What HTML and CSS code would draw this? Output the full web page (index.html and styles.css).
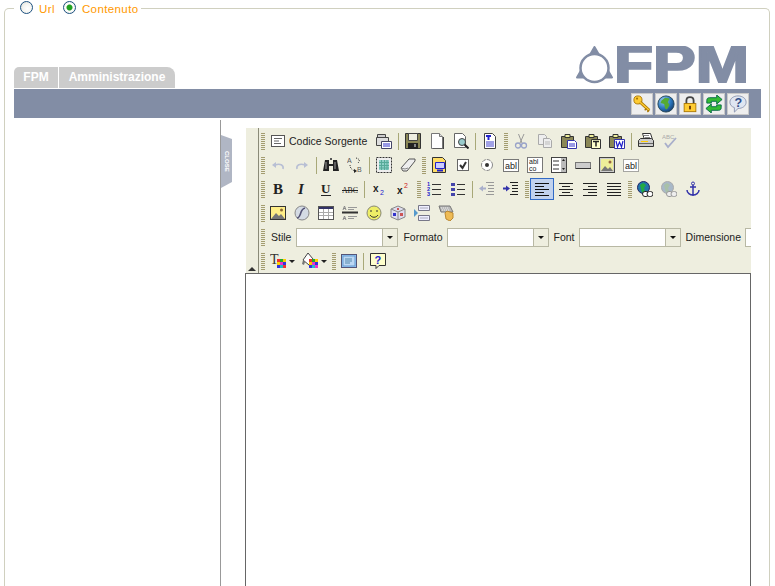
FILE: index.html
```html
<!DOCTYPE html>
<html lang="it">
<head>
<meta charset="utf-8">
<title>FPM</title>
<link rel="stylesheet" href="styles.css">
</head>
<body>
<svg class="sprite" aria-hidden="true">
<defs>
<radialGradient id="sphere" cx="35%" cy="30%" r="75%"><stop offset="0" stop-color="#9fd0f0"/><stop offset=".6" stop-color="#2a78c0"/><stop offset="1" stop-color="#173f70"/></radialGradient>
</defs>
<symbol id="source" viewBox="0 0 16 16"><rect x="1.500" y="2.500" width="13" height="11" fill="#fff" stroke="#555"/><path d="M4 5.500h8M4 8h5M4 10.500h7" stroke="#666" fill="none"/></symbol>
<symbol id="docprops" viewBox="0 0 16 16"><path d="M1.500 1.500h8v3h-8z" fill="#ccc" stroke="#444"/><path d="M.5 4.500h12v8H.5z" fill="#ddd" stroke="#444"/><path d="M5.500 8.500h10v7h-10z" fill="#fff" stroke="#446"/><path d="M7 11h7M7 13h7" stroke="#33c"/></symbol>
<symbol id="save" viewBox="0 0 16 16"><path d="M.5.500h15v15H.5z" fill="#8a8756" stroke="#333"/><path d="M3.500.500h9v7h-9z" fill="#eeeee0" stroke="#444"/><path d="M3 10h10v6H3z" fill="#222"/><path d="M9 11h2v3H9z" fill="#888"/></symbol>
<symbol id="new" viewBox="0 0 16 16"><path d="M2.500.500h8l3 3v12h-11z" fill="#fff" stroke="#777"/><path d="M10.500.500v3h3" fill="#ddd" stroke="#777"/><path d="M14.500 4v12H4" stroke="#444" fill="none"/></symbol>
<symbol id="preview" viewBox="0 0 16 16"><path d="M1.500.500h8l3 3v11h-11z" fill="#fff" stroke="#666"/><circle cx="9" cy="9" r="3.500" fill="#9cc" stroke="#444"/><path d="M11.500 11.500l4 4" stroke="#222" stroke-width="2"/></symbol>
<symbol id="templates" viewBox="0 0 16 16"><path d="M2.500.500h8l3 3v12h-11z" fill="#fff" stroke="#444"/><path d="M4 3h5M6.500 3v4" stroke="#22c" stroke-width="2"/><path d="M4 9h8M4 11h8M4 13h8" stroke="#44c"/></symbol>
<symbol id="cut" viewBox="0 0 16 16"><path d="M5.500 1l3.500 9M11 1L7 10" stroke="#999" fill="none"/><circle cx="5" cy="12.500" r="2.500" fill="none" stroke="#99a3c9" stroke-width="1.300"/><circle cx="11" cy="12.500" r="2.500" fill="none" stroke="#99a3c9" stroke-width="1.300"/></symbol>
<symbol id="copy" viewBox="0 0 16 16"><path d="M1.500 1.500h6l2 2v8h-8z" fill="#eee" stroke="#aaa"/><path d="M6.500 5.500h6l2 2v7h-8z" fill="#eee" stroke="#aaa"/><path d="M8 9h5M8 11h5" stroke="#bbb"/></symbol>
<symbol id="paste" viewBox="0 0 16 16"><path d="M.500 3.500h12v11H.5z" fill="#8a8756" stroke="#333"/><path d="M4 1.500h5v3H4z" fill="#ee9" stroke="#333"/><path d="M6.500 7.500h7l2 2v6h-9z" fill="#fff" stroke="#33a"/><path d="M8 11h6M8 13h6" stroke="#33c"/></symbol>
<symbol id="pastetext" viewBox="0 0 16 16"><path d="M.500 3.500h12v11H.5z" fill="#8a8756" stroke="#333"/><path d="M4 1.500h5v3H4z" fill="#ee9" stroke="#333"/><path d="M6.500 6.500h9v9h-9z" fill="#ffc" stroke="#333"/><path d="M8 8.500h6M11 8.500v5" stroke="#222" stroke-width="1.500"/></symbol>
<symbol id="pasteword" viewBox="0 0 16 16"><path d="M.500 3.500h12v11H.5z" fill="#8a8756" stroke="#333"/><path d="M4 1.500h5v3H4z" fill="#ee9" stroke="#333"/><path d="M5.500 6.500h10v9h-10z" fill="#fff" stroke="#33a"/><path d="M7 8l1.500 6L10.500 9l2 5L14 8" fill="none" stroke="#22c" stroke-width="1.200"/></symbol>
<symbol id="print" viewBox="0 0 16 16"><path d="M4.500.500h8l2 6h-8z" fill="#fff" stroke="#333"/><path d="M6 2.500h5M7 4.500h5" stroke="#888"/><path d="M.5 7.500l2-2h11l2 2v6h-15z" fill="#ccc" stroke="#333"/><path d="M1 10.500h14" stroke="#666"/><path d="M3 8.500h7" stroke="#fc0"/></symbol>
<symbol id="undo" viewBox="0 0 16 16"><path d="M13 12c1-4-3-6-8-4" fill="none" stroke="#b8bfd4" stroke-width="1.600"/><path d="M2 8l4-3v6z" fill="#b8bfd4"/></symbol>
<symbol id="redo" viewBox="0 0 16 16"><path d="M3 12c-1-4 3-6 8-4" fill="none" stroke="#b8bfd4" stroke-width="1.600"/><path d="M14 8l-4-3v6z" fill="#b8bfd4"/></symbol>
<symbol id="find" viewBox="0 0 16 16"><path d="M2 3h4v4h4V3h4l2 11h-6V9H6v5H0z" fill="#222"/><path d="M3 5v7M12 5v7" stroke="#999"/><path d="M7 1h2v2H7z" fill="#555"/></symbol>
<symbol id="selectall" viewBox="0 0 16 16"><rect x=".5" y=".5" width="15" height="15" fill="#eee" stroke="#333" stroke-dasharray="2 1"/><path d="M3 3h10v10H3z" fill="#8fd0c8"/><path d="M3 5.500h10M3 8.500h10M3 11h10M5.500 3v10M8.500 3v10M11 3v10" stroke="#5a9"/></symbol>
<symbol id="eraser" viewBox="0 0 16 16"><path d="M1 11l8-9h6v2l-8 10H3z" fill="#eee" stroke="#555"/><path d="M1 11l4 1 3-1" fill="none" stroke="#888"/></symbol>
<symbol id="form" viewBox="0 0 16 16"><path d="M1.500.500h10l3 3v12h-13z" fill="#fd6" stroke="#333"/><path d="M4.500 5.500h9v6h-9z" fill="#ccf" stroke="#22c"/><path d="M6 13.500h6" stroke="#22c" stroke-width="2"/></symbol>
<symbol id="check" viewBox="0 0 16 16"><rect x="2.500" y="2.500" width="11" height="11" fill="#fff" stroke="#666"/><path d="M5 8l2.500 3L11 5" fill="none" stroke="#333" stroke-width="2"/></symbol>
<symbol id="radio" viewBox="0 0 16 16"><circle cx="8" cy="8" r="5.500" fill="#fff" stroke="#888" stroke-dasharray="4 1"/><circle cx="8" cy="8" r="2" fill="#333"/></symbol>
<symbol id="selectf" viewBox="0 0 16 16"><rect x=".5" y=".5" width="15" height="15" fill="#fff" stroke="#444"/><path d="M10 1h5v14h-5z" fill="#bbb"/><path d="M2 4h6M2 8h6M2 12h6" stroke="#333"/><path d="M11 4h3l-1.500-2zM11 11h3l-1.500 2z" fill="#222"/></symbol>
<symbol id="buttonf" viewBox="0 0 16 16"><rect x=".5" y="5.500" width="15" height="6" fill="#ccc" stroke="#777"/><path d="M1 11.500h15" stroke="#333"/></symbol>
<symbol id="imagebtn" viewBox="0 0 16 16"><rect x=".5" y=".5" width="15" height="15" fill="#ccc" stroke="#444"/><rect x="2" y="2" width="12" height="12" fill="#ee9"/><path d="M2 14l4-5 3 3 2-2 3 4z" fill="#777"/><circle cx="11" cy="5" r="1.500" fill="#964"/></symbol>
<symbol id="ul" viewBox="0 0 16 16"><path d="M1 2h4v3H1zM1 7h4v3H1zM1 12h4v3H1z" fill="#44a"/><path d="M7 3.500h8M7 8.500h8M7 13.500h8" stroke="#333"/></symbol>
<symbol id="outdent" viewBox="0 0 16 16"><path d="M7 1.500h8M9 4.500h6M9 7.500h6M9 10.500h6M7 13.500h8" stroke="#999"/><path d="M0 7.500l4-3v2h3v2H4v2z" fill="#a9afcb"/></symbol>
<symbol id="indent" viewBox="0 0 16 16"><path d="M7 1.500h8M9 4.500h6M9 7.500h6M9 10.500h6M7 13.500h8" stroke="#222"/><path d="M7 7.500l-4-3v2H0v2h3v2z" fill="#33a"/></symbol>
<symbol id="left" viewBox="0 0 16 16"><path d="M1 2.500h14M1 5.500h9M1 8.500h14M1 11.500h9M1 14.500h14" stroke="#111"/></symbol>
<symbol id="center" viewBox="0 0 16 16"><path d="M1 2.500h14M4 5.500h8M1 8.500h14M4 11.500h8M1 14.500h14" stroke="#222"/></symbol>
<symbol id="right" viewBox="0 0 16 16"><path d="M1 2.500h14M6 5.500h9M1 8.500h14M6 11.500h9M1 14.500h14" stroke="#222"/></symbol>
<symbol id="justify" viewBox="0 0 16 16"><path d="M1 2.500h14M1 5.500h14M1 8.500h14M1 11.500h14M1 14.500h14" stroke="#222"/></symbol>
<symbol id="link" viewBox="0 0 16 16"><circle cx="6.500" cy="6.500" r="6" fill="#27a" stroke="#226"/><path d="M3 4l3-2 3 2-2 3 1 3-3 2-1-4z" fill="#2a4"/><rect x="5.500" y="10.500" width="6" height="5" rx="2.500" fill="#fff" stroke="#222"/><rect x="10" y="10.500" width="6" height="5" rx="2.500" fill="#fff" stroke="#222"/></symbol>
<symbol id="unlink" viewBox="0 0 16 16"><circle cx="6.500" cy="6.500" r="6" fill="#a8b8c8" stroke="#aaa"/><path d="M3 4l3-2 3 2-2 3 1 3-3 2-1-4z" fill="#a8c0a8"/><rect x="5.500" y="10.500" width="6" height="5" rx="2.500" fill="#eee" stroke="#999"/><rect x="10" y="10.500" width="6" height="5" rx="2.500" fill="#eee" stroke="#999"/></symbol>
<symbol id="anchor" viewBox="0 0 16 16"><circle cx="8" cy="2.500" r="1.500" fill="none" stroke="#33a"/><path d="M8 4v11M5 6h6M2 9c0 3 3 5 6 5s6-2 6-5" fill="none" stroke="#33a" stroke-width="1.500"/></symbol>
<symbol id="image" viewBox="0 0 16 16"><rect x=".5" y="1.500" width="15" height="13" fill="#fe8" stroke="#333"/><path d="M1 14l5-6 3 3 2-2 4 5z" fill="#777"/><circle cx="11.500" cy="5" r="1.500" fill="#863"/></symbol>
<symbol id="flash" viewBox="0 0 16 16"><circle cx="8" cy="8" r="7" fill="#d4dbe4" stroke="#888"/><path d="M11 3C7 4 7 8 6 10c-1 2-1 3-3 3" fill="none" stroke="#557" stroke-width="1.600"/></symbol>
<symbol id="table" viewBox="0 0 16 16"><rect x=".5" y="1.500" width="15" height="13" fill="#fff" stroke="#555"/><path d="M1 2h14v2H1z" fill="#336"/><path d="M1 7.500h14M1 10.500h14M5.500 4v10M10.500 4v10" stroke="#aaa"/></symbol>
<symbol id="rule" viewBox="0 0 16 16"><path d="M1 5l1.500-4L4 5M1.500 3.500h2M1 15l1.500-4L4 15M1.500 13.500h2" fill="none" stroke="#888"/><path d="M6 2.500h9M6 4.500h6" stroke="#999"/><path d="M0 7.500h16" stroke="#333" stroke-width="2"/><path d="M6 11.500h9M6 13.500h6" stroke="#999"/></symbol>
<symbol id="smiley" viewBox="0 0 16 16"><circle cx="8" cy="8" r="7" fill="#ee6" stroke="#887"/><path d="M5 5v2M11 5v2" stroke="#333"/><path d="M4 10c2 3 6 3 8 0" fill="none" stroke="#333"/></symbol>
<symbol id="special" viewBox="0 0 16 16"><path d="M8 1l7 3v8l-7 3-7-3V4z" fill="#dde" stroke="#888"/><path d="M8 7v8M1 4l7 3 7-3" fill="none" stroke="#888"/><path d="M3 8h3v3H3z" fill="#33c"/><path d="M10 8h3v3h-3z" fill="#c55"/><path d="M7 3h2v2H7z" fill="#c55"/></symbol>
<symbol id="pagebreak" viewBox="0 0 16 16"><path d="M4.500.500h11v5h-11zM4.500 10.500h11v5h-11z" fill="#eef" stroke="#778"/><path d="M6 3h8M6 13h8" stroke="#aab"/><path d="M0 4l4 4-4 4z" fill="#59c"/></symbol>
<symbol id="keyboard" viewBox="0 0 16 16"><path d="M1 1h11l3 6H3z" fill="#bbb" stroke="#777"/><path d="M3 3h8M4 5h8" stroke="#eee" stroke-dasharray="1 1"/><path d="M7 8l2-2 6 2v5l-3 3-4-2z" fill="#eb5" stroke="#b83"/></symbol>
<symbol id="bgcolor" viewBox="0 0 16 16"><path d="M6 0l5 6-4 6-6-5z" fill="#fff" stroke="#444"/><path d="M1 7l-1 4 2 1 1-3z" fill="#777"/><path d="M7 6h3v3H7z" fill="#e33"/><path d="M10 6h3v3h-3z" fill="#2a3"/><path d="M13 6h3v3h-3z" fill="#fc0"/><path d="M7 9h3v3H7z" fill="#fc0"/><path d="M10 9h3v3h-3z" fill="#e3c"/><path d="M13 9h3v3h-3z" fill="#33d"/><path d="M7 12h3v3H7z" fill="#33d"/><path d="M10 12h3v3h-3z" fill="#2bc"/><path d="M13 12h3v3h-3z" fill="#e3c"/></symbol>
<symbol id="maximize" viewBox="0 0 16 16"><rect x=".5" y="1.500" width="15" height="13" fill="#9cf" stroke="#557"/><rect x="2" y="3" width="12" height="10" fill="#bcd8f4" stroke="#69c"/><path d="M4 6h7M4 8h7M4 10h5" stroke="#58a"/></symbol>
<symbol id="key" viewBox="0 0 20 20"><circle cx="5.500" cy="5.500" r="4.500" fill="#fc3" stroke="#a70"/><circle cx="4.500" cy="4" r="1.200" fill="#a70"/><path d="M8 8l10 9" stroke="#a70" stroke-width="3.500"/><path d="M8 8l10 9" stroke="#fc3" stroke-width="1.500"/><path d="M15 15l-2 2M18 17l-2 2" stroke="#a70" stroke-width="1.500"/></symbol>
<symbol id="globe" viewBox="0 0 20 20"><circle cx="10" cy="10" r="9" fill="url(#sphere)" stroke="#245"/><path d="M5 6l4-3 5 1-2 4 2 3-3 5-2-1-1-5-4-1z" fill="#5a3"/></symbol>
<symbol id="lock" viewBox="0 0 20 20"><path d="M6 10V6c0-5 8-5 8 0v4" fill="none" stroke="#444" stroke-width="2"/><rect x="3.500" y="9.500" width="13" height="9" fill="#fc3" stroke="#a70"/><rect x="9" y="12" width="2" height="4" fill="#630"/></symbol>
<symbol id="refresh" viewBox="0 0 20 20"><path d="M2 9V6c0-2 1-3 3-3h8V0l6 5-6 5V7H7v2z" fill="#3b3" stroke="#064" stroke-linejoin="round"/><path d="M18 11v3c0 2-1 3-3 3H7v3l-6-5 6-5v3h6v-2z" fill="#3b3" stroke="#064" stroke-linejoin="round"/></symbol>
</svg>

<fieldset class="frame">
  <legend class="legend">
    <label class="opt"><input class="radio" type="radio" name="mode"><span>Url</span></label>
    <label class="opt"><input class="radio" type="radio" name="mode" checked><span>Contenuto</span></label>
  </legend>

  <header class="head">
    <nav class="tabs">
      <a class="tab">FPM</a>
      <a class="tab tab-wide">Amministrazione</a>
    </nav>
    <svg class="logo" viewBox="0 0 176 38" role="img" aria-label="FPM">
      <path d="M18.500 1L36 31.500H1z" fill="#828da5" stroke="#828da5" stroke-width="2" stroke-linejoin="round"/>
      <circle cx="18.500" cy="22" r="14" fill="#fff" stroke="#828da5" stroke-width="2.500"/>
      <text class="logo-text" x="38" y="36" textLength="135" lengthAdjust="spacingAndGlyphs" fill="#828da5" stroke="#828da5" stroke-width="2">FPM</text>
    </svg>
  </header>

  <div class="band">
    <a class="tool"><svg class="tool-ic"><use href="#key"/></svg></a>
    <a class="tool"><svg class="tool-ic"><use href="#globe"/></svg></a>
    <a class="tool"><svg class="tool-ic"><use href="#lock"/></svg></a>
    <a class="tool"><svg class="tool-ic"><use href="#refresh"/></svg></a>
    <a class="tool"><svg class="tool-ic" viewBox="0 0 20 20"><path d="M10 1c5 0 9 3 9 7s-4 7-9 7l-4 4v-5C3 13 1 11 1 8c0-4 4-7 9-7z" fill="#dfe6f2" stroke="#8a94b0"/><text x="6" y="13" class="t14 b" fill="#33508a">?</text></svg></a>
  </div>

  <div class="main">
    <aside class="side"></aside>
    <div class="close"><span class="close-text">CLOSE</span></div>
    <section class="editor">
      <div class="toolbar">
        <div class="collapse"><span class="collapse-arrow"></span></div>
        <div class="rows">
          <div class="row">
            <i class="grip grip-first"></i>
            <span class="btn btn-text"><svg class="ic"><use href="#source"/></svg><span>Codice Sorgente</span></span>
            <span class="btn"><svg class="ic"><use href="#docprops"/></svg></span>
            <i class="sep"></i>
            <span class="btn"><svg class="ic"><use href="#save"/></svg></span>
            <span class="btn"><svg class="ic"><use href="#new"/></svg></span>
            <span class="btn"><svg class="ic"><use href="#preview"/></svg></span>
            <i class="sep"></i>
            <span class="btn"><svg class="ic"><use href="#templates"/></svg></span>
            <i class="grip"></i>
            <span class="btn"><svg class="ic"><use href="#cut"/></svg></span>
            <span class="btn"><svg class="ic"><use href="#copy"/></svg></span>
            <span class="btn"><svg class="ic"><use href="#paste"/></svg></span>
            <span class="btn"><svg class="ic"><use href="#pastetext"/></svg></span>
            <span class="btn"><svg class="ic"><use href="#pasteword"/></svg></span>
            <i class="sep"></i>
            <span class="btn"><svg class="ic"><use href="#print"/></svg></span>
            <span class="btn"><svg class="ic" viewBox="0 0 16 16"><text x="0" y="6" class="t6" fill="#aaa">ABC</text><path d="M3 10l3 4 8-9" fill="none" stroke="#a9afcb" stroke-width="1.800"/></svg></span>
          </div>
          <div class="row">
            <i class="grip grip-first"></i>
            <span class="btn"><svg class="ic"><use href="#undo"/></svg></span>
            <span class="btn"><svg class="ic"><use href="#redo"/></svg></span>
            <i class="sep"></i>
            <span class="btn"><svg class="ic"><use href="#find"/></svg></span>
            <span class="btn"><svg class="ic" viewBox="0 0 16 16"><text x="0" y="6" class="t7" fill="#555">A</text><text x="10" y="15" class="t7" fill="#555">B</text><path d="M9 1c4 1 4 3 2 5M3 8c0 3 2 5 5 6" fill="none" stroke="#333" stroke-dasharray="1 1"/><path d="M7 12l3 2-3 2z" fill="#222"/></svg></span>
            <i class="sep"></i>
            <span class="btn"><svg class="ic"><use href="#selectall"/></svg></span>
            <span class="btn"><svg class="ic"><use href="#eraser"/></svg></span>
            <i class="grip"></i>
            <span class="btn"><svg class="ic"><use href="#form"/></svg></span>
            <span class="btn"><svg class="ic"><use href="#check"/></svg></span>
            <span class="btn"><svg class="ic"><use href="#radio"/></svg></span>
            <span class="btn"><svg class="ic" viewBox="0 0 16 16"><rect x=".5" y="2.500" width="15" height="12" fill="#fff" stroke="#777"/><text x="2" y="12" class="t9" fill="#222">abl</text></svg></span>
            <span class="btn"><svg class="ic" viewBox="0 0 16 16"><rect x=".5" y=".5" width="15" height="15" fill="#fff" stroke="#777"/><text x="2" y="6.500" class="t7" fill="#222">abl</text><text x="2" y="14" class="t7" fill="#222">co</text></svg></span>
            <span class="btn"><svg class="ic"><use href="#selectf"/></svg></span>
            <span class="btn"><svg class="ic"><use href="#buttonf"/></svg></span>
            <span class="btn"><svg class="ic"><use href="#imagebtn"/></svg></span>
            <span class="btn"><svg class="ic" viewBox="0 0 16 16"><rect x=".5" y="2.500" width="15" height="12" fill="#fff" stroke="#555" stroke-dasharray="1 1"/><text x="2" y="12" class="t9" fill="#222">abl</text></svg></span>
          </div>
          <div class="row">
            <i class="grip grip-first"></i>
            <span class="btn"><svg class="ic" viewBox="0 0 16 16"><text x="3" y="13" class="serif15 b" fill="#222">B</text></svg></span>
            <span class="btn"><svg class="ic" viewBox="0 0 16 16"><text x="4" y="13" class="serif15 b i" fill="#222">I</text></svg></span>
            <span class="btn"><svg class="ic" viewBox="0 0 16 16"><text x="3" y="12" class="serif13 b" fill="#222">U</text><path d="M3 14.500h10" stroke="#222"/></svg></span>
            <span class="btn"><svg class="ic" viewBox="0 0 16 16"><text x="0" y="12" class="serif8" textLength="16" lengthAdjust="spacingAndGlyphs" fill="#222">ABC</text><path d="M0 9.500h16" stroke="#222"/></svg></span>
            <i class="sep"></i>
            <span class="btn"><svg class="ic" viewBox="0 0 16 16"><text x="2" y="11" class="t10 b" fill="#222">x</text><text x="9" y="14" class="t7" fill="#22c">2</text></svg></span>
            <span class="btn"><svg class="ic" viewBox="0 0 16 16"><text x="2" y="13" class="t10 b" fill="#222">x</text><text x="9" y="7" class="t7" fill="#c22">2</text></svg></span>
            <i class="grip"></i>
            <span class="btn"><svg class="ic" viewBox="0 0 16 16"><text x="1" y="5" class="t5 b" fill="#22c">1</text><text x="1" y="10" class="t5 b" fill="#22c">2</text><text x="1" y="15" class="t5 b" fill="#22c">3</text><path d="M6 3.500h9M6 8.500h9M6 13.500h9" stroke="#333"/></svg></span>
            <span class="btn"><svg class="ic"><use href="#ul"/></svg></span>
            <i class="sep"></i>
            <span class="btn"><svg class="ic"><use href="#outdent"/></svg></span>
            <span class="btn"><svg class="ic"><use href="#indent"/></svg></span>
            <i class="grip"></i>
            <span class="btn btn-on"><svg class="ic"><use href="#left"/></svg></span>
            <span class="btn"><svg class="ic"><use href="#center"/></svg></span>
            <span class="btn"><svg class="ic"><use href="#right"/></svg></span>
            <span class="btn"><svg class="ic"><use href="#justify"/></svg></span>
            <i class="grip"></i>
            <span class="btn"><svg class="ic"><use href="#link"/></svg></span>
            <span class="btn"><svg class="ic"><use href="#unlink"/></svg></span>
            <span class="btn"><svg class="ic"><use href="#anchor"/></svg></span>
          </div>
          <div class="row">
            <i class="grip grip-first"></i>
            <span class="btn"><svg class="ic"><use href="#image"/></svg></span>
            <span class="btn"><svg class="ic"><use href="#flash"/></svg></span>
            <span class="btn"><svg class="ic"><use href="#table"/></svg></span>
            <span class="btn"><svg class="ic"><use href="#rule"/></svg></span>
            <span class="btn"><svg class="ic"><use href="#smiley"/></svg></span>
            <span class="btn"><svg class="ic"><use href="#special"/></svg></span>
            <span class="btn"><svg class="ic"><use href="#pagebreak"/></svg></span>
            <span class="btn"><svg class="ic"><use href="#keyboard"/></svg></span>
          </div>
          <div class="row">
            <i class="grip grip-first"></i>
            <span class="lbl lbl-first">Stile</span>
            <span class="combo"><span class="combo-arrow"></span></span>
            <span class="lbl">Formato</span>
            <span class="combo"><span class="combo-arrow"></span></span>
            <span class="lbl">Font</span>
            <span class="combo"><span class="combo-arrow"></span></span>
            <span class="lbl">Dimensione</span>
            <span class="combo"><span class="combo-arrow"></span></span>
          </div>
          <div class="row">
            <i class="grip grip-first"></i>
            <span class="btn btn-drop"><svg class="ic" viewBox="0 0 16 16"><text x="0" y="11" class="serif14" fill="#333">T</text><path d="M7 6h3v3H7z" fill="#e33"/><path d="M10 6h3v3h-3z" fill="#2a3"/><path d="M13 6h3v3h-3z" fill="#fc0"/><path d="M7 9h3v3H7z" fill="#fc0"/><path d="M10 9h3v3h-3z" fill="#e3c"/><path d="M13 9h3v3h-3z" fill="#33d"/><path d="M7 12h3v3H7z" fill="#33d"/><path d="M10 12h3v3h-3z" fill="#2bc"/><path d="M13 12h3v3h-3z" fill="#e33"/></svg><i class="drop"></i></span>
            <span class="btn btn-drop"><svg class="ic"><use href="#bgcolor"/></svg><i class="drop"></i></span>
            <i class="grip"></i>
            <span class="btn"><svg class="ic"><use href="#maximize"/></svg></span>
            <i class="sep"></i>
            <span class="btn"><svg class="ic" viewBox="0 0 16 16"><path d="M.500.500h15v12H9l-3 3v-3H.5z" fill="#ffc" stroke="#333"/><text x="4.500" y="11" class="t11 b" fill="#22c">?</text></svg></span>
          </div>
        </div>
      </div>
      <div class="area"></div>
    </section>
  </div>
</fieldset>
</body>
</html>
```
FILE: styles.css
```css
html, body {
  margin: 0;
  height: 586px;
  overflow: hidden;
  background: #fff;
  font-family: "Liberation Sans", Arial, sans-serif;
}

.sprite {
  position: absolute;
  width: 0;
  height: 0;
}

.frame {
  margin: 0 5px 0 4px;
  padding: 0 8px 0 9px;
  min-width: 0;
  border: 1px solid #d0d0bf;
  border-bottom: 0;
  border-radius: 5px 5px 0 0;
  height: 586px;
  box-sizing: border-box;
  overflow: hidden;
}

.legend {
  margin-left: 0;
  padding: 0 2px 0 6px;
  display: flex;
  gap: 8px;
  height: 16px;
  align-items: flex-start;
}

.opt {
  display: flex;
  align-items: flex-start;
  gap: 6px;
  color: #ff9900;
  font-size: 11.5px;
  letter-spacing: 0.4px;
  line-height: 19px;
}

.radio {
  appearance: none;
  margin: 1px 0 0;
  width: 13px;
  height: 13px;
  border: 1px solid #1c5180;
  border-radius: 50%;
  background: radial-gradient(circle at 60% 60%, #ffffff 0, #f4f4f0 50%, #d8d8d0 100%);
}

.radio:checked {
  background: radial-gradient(circle, #21a121 0, #21a121 2.5px, #ffffff 3.5px, #e8e8e0 100%);
}

.head {
  display: flex;
  justify-content: space-between;
  align-items: flex-end;
  height: 73px;
}

.tabs {
  display: flex;
  gap: 1px;
  margin-bottom: 1px;
}

.tab {
  width: 44px;
  height: 21px;
  background: #cccccc;
  color: #fff;
  font-size: 12px;
  font-weight: bold;
  line-height: 21px;
  text-align: center;
  border-radius: 5px 0 0 0;
}

.tab-wide {
  width: 116px;
  border-radius: 0 8px 0 0;
}

.logo {
  width: 176px;
  height: 38px;
  margin: 0 9px 5px 0;
}

.logo-text {
  font-family: "Liberation Sans", Arial, sans-serif;
  font-weight: bold;
  font-size: 51px;
}

.band {
  height: 29px;
  background: #828da5;
  display: flex;
  justify-content: flex-end;
  align-items: center;
  gap: 2px;
  padding-right: 12px;
}

.tool {
  width: 20px;
  height: 20px;
  background: #eeeeee;
  border: 1px solid #c8c8c8;
  display: flex;
  align-items: center;
  justify-content: center;
}

.tool-ic {
  width: 18px;
  height: 18px;
}

.main {
  position: relative;
  margin-top: 2px;
  display: flex;
  height: 466px;
}

.side {
  width: 206px;
  border-right: 1px solid #999;
  flex: none;
}

.close {
  position: absolute;
  left: 207px;
  top: 15px;
  width: 11px;
  height: 53px;
  background: #b0b6c4;
  clip-path: polygon(0 0, 100% 4px, 100% 47px, 0 100%);
  display: flex;
  align-items: center;
  justify-content: center;
}

.close-text {
  writing-mode: vertical-rl;
  color: #fff;
  font-size: 6px;
  font-weight: bold;
}

.editor {
  margin: 8px 0 0 24px;
  width: 506px;
  flex: none;
}

.toolbar {
  margin-left: 1px;
  width: 505px;
  height: 145px;
  background: #eeeedf;
  display: flex;
  overflow: hidden;
}

.collapse {
  width: 12px;
  flex: none;
  border-right: 1px solid #8a8a78;
  position: relative;
}

.collapse-arrow {
  position: absolute;
  left: 2px;
  bottom: 2px;
  border: 4px solid transparent;
  border-top: 0;
  border-bottom-color: #333;
}

.rows {
  flex: 1;
  min-width: 0;
  padding-top: 1px;
}

.row {
  height: 24px;
  display: flex;
  align-items: center;
  white-space: nowrap;
}

.grip {
  flex: none;
  width: 4px;
  height: 17px;
  margin: 0 1px 0 2px;
  background: repeating-linear-gradient(to bottom, #a39c70 0, #a39c70 1px, transparent 1px, transparent 2px);
}

.sep {
  flex: none;
  width: 1px;
  height: 17px;
  margin: 0 2px;
  background: #a8a878;
}

.btn {
  flex: none;
  width: 24px;
  height: 22px;
  box-sizing: border-box;
  display: flex;
  align-items: center;
  padding-left: 4px;
  font-size: 10.5px;
  color: #222;
}

.btn-text {
  width: 106px;
  gap: 3px;
}

.btn-on {
  background: #c1d2ee;
  border: 1px solid #316ac5;
  padding-left: 3px;
}

.btn-drop {
  width: 32px;
  gap: 3px;
}

.drop {
  border: 3px solid transparent;
  border-bottom: 0;
  border-top: 3px solid #222;
}

.ic {
  width: 16px;
  height: 16px;
  flex: none;
}

.lbl {
  flex: none;
  font-size: 10.5px;
  color: #222;
  padding: 0 4px 0 5px;
}

.lbl-first {
  padding-right: 5px;
}

.combo {
  flex: none;
  width: 102px;
  height: 19px;
  box-sizing: border-box;
  border: 1px solid #b8b8a4;
  background: #fff;
  display: flex;
  justify-content: flex-end;
}

.combo-arrow {
  width: 14px;
  background: #eeeedf;
  border-left: 1px solid #b8b8a4;
  position: relative;
}

.combo-arrow::after {
  content: "";
  position: absolute;
  left: 4px;
  top: 7px;
  border: 3px solid transparent;
  border-bottom: 0;
  border-top: 3px solid #111;
}

.area {
  box-sizing: border-box;
  height: 313px;
  background: #fff;
  border: 1px solid #666;
  border-bottom: 0;
}

svg text {
  font-family: "Liberation Sans", Arial, sans-serif;
}

svg .t5 { font-size: 5.5px; }
svg .t6 { font-size: 6px; }
svg .t7 { font-size: 7px; }
svg .t9 { font-size: 9px; }
svg .t10 { font-size: 10px; }
svg .t11 { font-size: 11px; }
svg .t14 { font-size: 14px; }
svg .b { font-weight: bold; }
svg .i { font-style: italic; }
svg .serif8 { font-family: "Liberation Serif", serif; font-size: 8px; }
svg .serif13 { font-family: "Liberation Serif", serif; font-size: 13px; }
svg .serif14 { font-family: "Liberation Serif", serif; font-size: 14px; }
svg .serif15 { font-family: "Liberation Serif", serif; font-size: 15px; }
```
